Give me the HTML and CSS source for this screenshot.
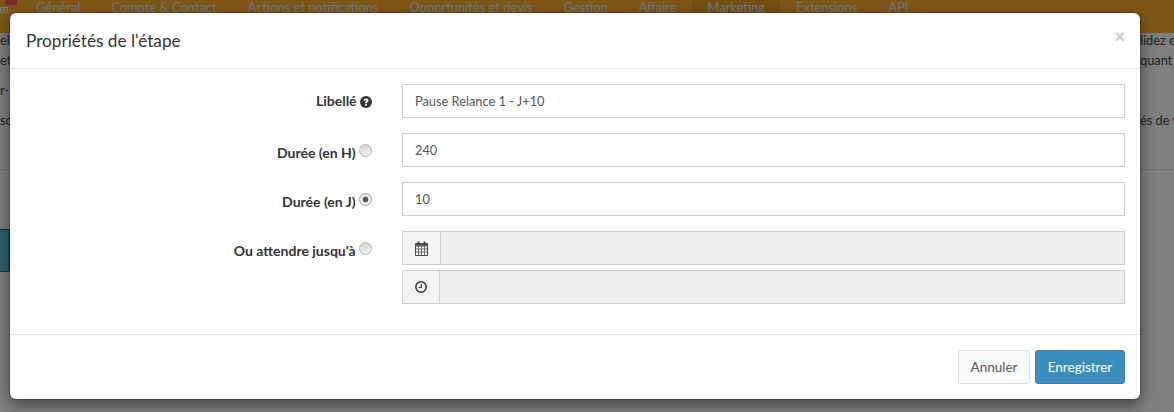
FILE: index.html
```html
<!DOCTYPE html>
<html lang="fr">
<head>
  <meta charset="UTF-8">
  <meta name="viewport" content="width=device-width, initial-scale=1.0">
  <title>Propriétés de l'étape</title>
  <link rel="stylesheet" href="styles.css">
</head>
<body>

  <div class="page">
    <nav class="onglets">
      <span class="badge"></span>
      <svg class="icone-grille" viewBox="0 0 8 6"><path d="M0 .5h8M0 3h8M0 5.5h8M.5 0v6M4 0v6M7.5 0v6" stroke="#f0f0f0" stroke-width="1" fill="none"/></svg>
      <a>Général</a>
      <a>Compte &amp; Contact</a>
      <a>Actions et notifications</a>
      <a>Opportunités et devis</a>
      <a>Gestion</a>
      <a>Affaire</a>
      <a class="actif">Marketing</a>
      <a>Extensions</a>
      <a>API</a>
    </nav>
    <div class="contenu">
      <p class="ligne"><span class="gauche">ell</span><span>lidez e</span></p>
      <p class="ligne"><span class="gauche">et</span><span>quant</span></p>
      <p class="ligne"><span class="gauche">r-</span></p>
      <p class="ligne"><span class="gauche">so</span><span>és de v</span></p>
      <hr class="separateur">
      <div class="bloc-teal"></div>
    </div>
  </div>

  <div class="fond-modal"></div>

  <div class="modal">
    <div class="modal-header">
      <h4>Propriétés de l'étape</h4>
      <button class="fermer">×</button>
    </div>

    <form class="modal-body">
      <div class="champ">
        <label class="libelle">Libellé
          <svg class="icone-aide" viewBox="0 0 12 12"><circle cx="6" cy="6" r="6" fill="#333"/><path d="M3.7 4.7C3.8 3.2 4.8 2.4 6.1 2.4c1.3 0 2.4.8 2.4 2 0 1.7-1.6 1.5-1.6 2.8H5.1c0-2 1.5-1.9 1.5-2.7 0-.4-.3-.6-.6-.6-.4 0-.6.3-.7.8z" fill="#fff"/><rect x="5.1" y="7.9" width="1.8" height="1.7" fill="#fff"/></svg>
        </label>
        <div class="valeur"><input type="text" value="Pause Relance 1 - J+10"></div>
      </div>

      <div class="champ">
        <label class="libelle libelle-radio">Durée (en H) <span class="radio"></span></label>
        <div class="valeur"><input type="text" value="240"></div>
      </div>

      <div class="champ">
        <label class="libelle libelle-radio">Durée (en J) <span class="radio coche"></span></label>
        <div class="valeur"><input type="text" value="10"></div>
      </div>

      <div class="champ">
        <label class="libelle libelle-radio">Ou attendre jusqu'à <span class="radio"></span></label>
        <div class="valeur groupes">
          <div class="groupe">
            <span class="addon">
              <svg class="icone-addon" viewBox="0 0 13 15"><path d="M.5 2.5h12v12H.5z" fill="none" stroke="#444"/><path d="M.5 2.5h12v3H.5z" fill="#555"/><path d="M.5 8h12M.5 11h12M3.5 5.5v9M6.5 5.5v9M9.5 5.5v9" stroke="#555" stroke-width=".8"/><path d="M3.5 .5v3M9.5 .5v3" stroke="#333" stroke-width="1.7"/></svg>
            </span>
            <input type="text" disabled>
          </div>
          <div class="groupe">
            <span class="addon addon-heure">
              <svg class="icone-addon icone-heure" viewBox="0 0 12 12"><circle cx="6" cy="6" r="5.2" fill="none" stroke="#333" stroke-width="1.5"/><path d="M6.3 3v3.5H3.6" fill="none" stroke="#333" stroke-width="1.1"/></svg>
            </span>
            <input type="text" disabled>
          </div>
        </div>
      </div>
    </form>

    <div class="modal-footer">
      <button class="btn btn-annuler">Annuler</button>
      <button class="btn btn-enregistrer">Enregistrer</button>
    </div>
  </div>

</body>
</html>
```

FILE: styles.css
```css
html, body {
  margin: 0;
  padding: 0;
  height: 100%;
  overflow: hidden;
}
body {
  font-family: Lato, "Open Sans", sans-serif;
  font-size: 14px;
  color: #333;
  background-color: #fff;
}

/* page behind the modal */
.onglets {
  position: relative;
  height: 33px;
  background-color: #ffae30;
  display: flex;
  padding-left: 21px;
  font-size: 12.9px;
}
.onglets a {
  color: #f0f0f0;
  padding: 0 15px;
  margin-right: 1px;
  line-height: 15px;
  white-space: nowrap;
}
.onglets .actif {
  background-color: #e9a02c;
}
.badge {
  position: absolute;
  top: 0;
  left: 5px;
  width: 12px;
  height: 5px;
  border-radius: 0 0 2px 2px;
  background-color: #f05050;
}
.icone-grille {
  position: absolute;
  top: 7px;
  left: 0;
  width: 8px;
  height: 6px;
}
.ligne {
  display: flex;
  margin: 0 0 16px;
  height: 14px;
  line-height: 14px;
  font-size: 12.8px;
  color: #444;
  white-space: nowrap;
}
.ligne:first-child {
  margin-bottom: 6px;
}
.gauche {
  flex: 0 0 1140px;
}
.separateur {
  border: none;
  border-top: 1px solid #ddd;
  margin: 42px 0 60px;
}
.bloc-teal {
  box-sizing: border-box;
  width: 9px;
  height: 41px;
  background-color: #5bc0de;
  border: 1px solid #46b8da;
  border-left: none;
  outline: 1px solid #555;
}

.fond-modal {
  position: absolute;
  top: 0;
  left: 0;
  width: 100%;
  height: 100%;
  background-color: #000;
  opacity: 0.5;
}

.modal {
  position: absolute;
  top: 13px;
  left: 10px;
  width: 1130px;
  background-color: #fff;
  border-radius: 6px;
  box-shadow: 0 0 0 1px rgba(0, 0, 0, 0.2), 0 5px 15px rgba(0, 0, 0, 0.5);
}
.modal-header {
  height: 55px;
  border-bottom: 1px solid #e5e5e5;
  display: flex;
  align-items: center;
  justify-content: space-between;
  padding: 0 15px 0 16px;
}
.modal-header h4 {
  margin: 0;
  font-size: 17.2px;
  font-weight: 400;
}
.fermer {
  border: none;
  background: none;
  padding: 0;
  margin-bottom: 7px;
  font-size: 18px;
  font-weight: 700;
  color: #ccc;
  font-family: "Liberation Sans", sans-serif;
}
.modal-body {
  padding: 15px 15px 30px;
}
.champ {
  display: flex;
  margin-bottom: 15px;
}
.champ:last-child {
  margin-bottom: 0;
}
.libelle {
  width: 347px;
  padding-top: 9px;
  text-align: right;
  font-weight: 700;
  font-size: 14px;
  line-height: 16px;
}
.libelle-radio {
  padding-top: 11px;
}
.valeur {
  margin-left: 30px;
  flex: 1;
}
.valeur input {
  width: 100%;
  box-sizing: border-box;
  height: 34px;
  border: 1px solid #ccc;
  padding: 0 12px;
  font: inherit;
  font-size: 12.8px;
  color: #555;
  outline: none;
}
.valeur input:disabled {
  background-color: #eee;
}
.groupes {
  display: flex;
  flex-direction: column;
  gap: 5px;
}
.groupe {
  display: flex;
}
.addon {
  width: 38px;
  flex: none;
  box-sizing: border-box;
  height: 34px;
  display: flex;
  align-items: center;
  justify-content: center;
  background-color: #f3f3f3;
  border: 1px solid #ccc;
  border-right: none;
}
.addon-heure {
  width: 37px;
}
.icone-addon {
  width: 13px;
  height: 15px;
}
.icone-heure {
  width: 12px;
  height: 12px;
}
.icone-aide {
  width: 12px;
  height: 12px;
  vertical-align: -2px;
}
.radio {
  display: inline-block;
  box-sizing: border-box;
  width: 13px;
  height: 13px;
  border-radius: 50%;
  border: 1px solid #b0b0b0;
  background: linear-gradient(#d4d4d4, #f4f4f4);
  vertical-align: 1px;
}
.radio.coche {
  background: radial-gradient(circle, #555 0 2.5px, #eee 3.2px);
  border-color: #999;
}

.modal-footer {
  border-top: 1px solid #e5e5e5;
  display: flex;
  justify-content: flex-end;
  gap: 5px;
  padding: 15px;
}
.btn {
  height: 34px;
  font: inherit;
  font-size: 13.5px;
  border-radius: 3px;
  padding: 0;
}
.btn-annuler {
  width: 72px;
  background-color: #f9f9f9;
  color: #555;
  border: 1px solid #ddd;
}
.btn-enregistrer {
  width: 90px;
  background-color: #3c8dbc;
  color: #fff;
  border: 1px solid #367fa9;
}
```
